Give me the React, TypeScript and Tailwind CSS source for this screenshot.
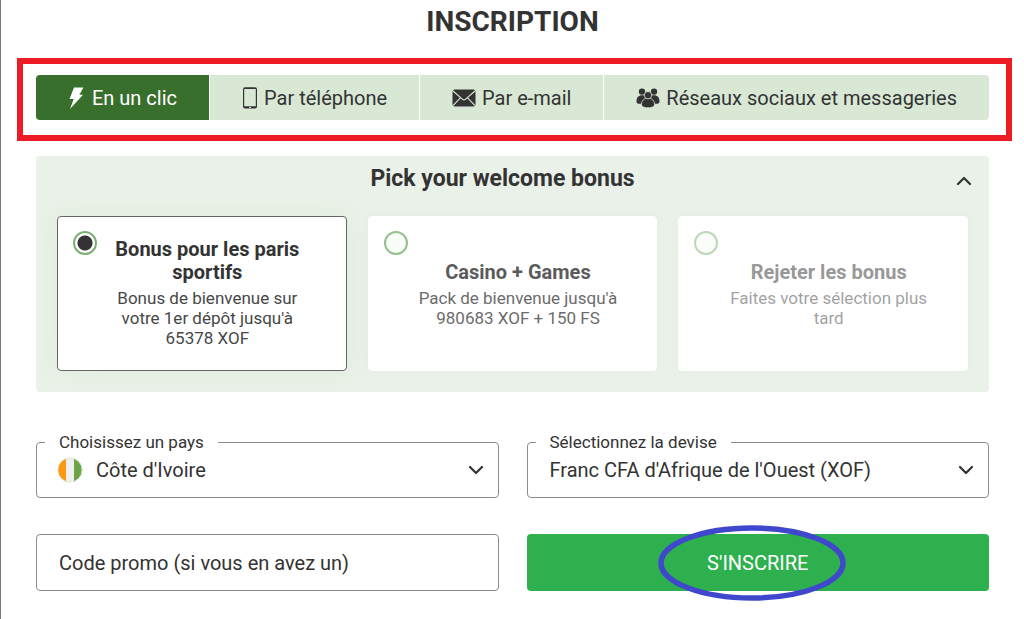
import React, { useState } from "react";

const BoltIcon = () => (
  <svg viewBox="0 0 16 24" className="h-6 w-4 shrink-0" fill="currentColor">
    <path d="M6 1.5h9.400l-4 7.300h3.600L2 23l3.700-10H1.500z" />
  </svg>
);

const PhoneIcon = () => (
  <svg viewBox="0 0 16 24" className="h-6 w-4 shrink-0">
    <path
      fill="currentColor"
      fillRule="evenodd"
      d="M3 1.200h10a2 2 0 0 1 2 2v17.300a2 2 0 0 1-2 2H3a2 2 0 0 1-2-2V3.200a2 2 0 0 1 2-2zM2.200 3v17.200h11.600V3z"
    />
    <path d="M7 21.400h2" stroke="#d9e8d5" strokeWidth="1" />
  </svg>
);

const MailIcon = () => (
  <svg viewBox="0 0 24 18" className="h-[18px] w-6 shrink-0">
    <rect x="0.5" y="0.5" width="23" height="17" rx="2.5" fill="currentColor" />
    <path
      d="M1 2l9.4 8.2q1.6 1.3 3.2 0L23 2M1.2 16.4l7.2-7.6M22.8 16.4l-7.2-7.6"
      fill="none"
      stroke="#d9e8d5"
      strokeWidth="1.1"
    />
  </svg>
);

const PeopleIcon = () => (
  <svg viewBox="0 0 24 20" className="h-5 w-6 shrink-0" fill="currentColor">
    <circle cx="6" cy="3.6" r="3.2" />
    <circle cx="18" cy="3.6" r="3.2" />
    <path d="M0.5 13c0-3.6 2-5.8 5.5-5.8s5 2 5 5v3.600H2.5Q0.500 15.800 0.500 13z" />
    <path d="M23.5 13c0-3.6-2-5.8-5.5-5.8s-5 2-5 5v3.600h8.500q2 0 2-2.800z" />
    <g stroke="#d9e8d5" strokeWidth="0.8">
      <path d="M5.500 16.500c0-4 2.600-6.300 6.500-6.300s6.500 2.300 6.500 6.300c0 2.300-2.900 3.300-6.500 3.300s-6.500-1-6.500-3.300z" />
      <circle cx="12" cy="7.200" r="3.700" />
    </g>
  </svg>
);

const Chevron = ({ className }: { className: string }) => (
  <svg
    viewBox="0 0 16 10"
    className={className}
    fill="none"
    stroke="currentColor"
    strokeWidth="2.2"
    strokeLinecap="round"
    strokeLinejoin="round"
  >
    <path d="M2 2l6 6 6-6" />
  </svg>
);

const FlagIcon = () => (
  <svg
    viewBox="0 0 26 26"
    className="pointer-events-none absolute left-5 top-[5px] h-[26px] w-[26px]"
  >
    <clipPath id="flag">
      <circle cx="13" cy="13" r="12" />
    </clipPath>
    <g clipPath="url(#flag)">
      <rect width="26" height="26" fill="#f0f0f0" />
      <rect width="9" height="26" fill="#ff9811" />
      <rect x="17" width="9" height="26" fill="#6da544" />
    </g>
    <circle cx="13" cy="13" r="12.2" fill="none" stroke="#d9e8d5" />
  </svg>
);

const tabs = [
  { label: "En un clic", icon: <BoltIcon /> },
  { label: "Par téléphone", icon: <PhoneIcon /> },
  { label: "Par e-mail", icon: <MailIcon /> },
  { label: "Réseaux sociaux et messageries", icon: <PeopleIcon /> },
];

const bonuses = [
  {
    id: "sport",
    title: "Bonus pour les paris sportifs",
    text: "Bonus de bienvenue sur votre 1er dépôt jusqu'à 65378 XOF",
    tone: "",
  },
  {
    id: "casino",
    title: "Casino + Games",
    text: "Pack de bienvenue jusqu'à 980683 XOF + 150 FS",
    tone: "opacity-80",
  },
  {
    id: "none",
    title: "Rejeter les bonus",
    text: "Faites votre sélection plus tard",
    tone: "opacity-50",
  },
];

type SelectProps = {
  id: string;
  label: string;
  option: string;
  flag?: React.ReactNode;
};

const SelectField = ({ id, label, option, flag }: SelectProps) => (
  <fieldset className="min-w-0 rounded border border-[#8c8c8c] pb-[9px]">
    <legend className="ml-2 px-3.5 text-[17px] leading-5">
      <label htmlFor={id}>{label}</label>
    </legend>
    <div className="relative">
      {flag}
      <select
        id={id}
        className={
          flag
            ? "h-9 w-full appearance-none pl-[59px] pr-12 text-xl leading-6 outline-none"
            : "h-9 w-full appearance-none pl-[22px] pr-12 text-xl leading-6 outline-none"
        }
      >
        <option>{option}</option>
      </select>
      <Chevron className="pointer-events-none absolute right-3.5 top-[13px] h-2.5 w-4" />
    </div>
  </fieldset>
);

const App = () => {
  const [tab, setTab] = useState(0);
  const [bonus, setBonus] = useState("sport");
  const [open, setOpen] = useState(true);

  return (
    <main className="min-h-screen border-l border-[#6d8069] bg-white pt-1 font-['Roboto',sans-serif] text-[#333]">
      <h1 className="text-center text-[28px] font-bold leading-9">
        INSCRIPTION
      </h1>
      <div className="ml-4 mr-3 mt-[18px] border-6 border-[#ed1c24] pb-[15px] pl-[13px] pr-[17px] pt-[11px]">
        <div role="tablist" className="flex gap-px overflow-hidden rounded">
          {tabs.map((item, i) => (
            <button
              key={item.label}
              type="button"
              role="tab"
              aria-selected={tab === i}
              onClick={() => setTab(i)}
              className={
                tab === i
                  ? "flex h-[45px] grow items-center justify-center gap-2 bg-[#396f2d] px-7 text-xl text-white"
                  : "flex h-[45px] grow items-center justify-center gap-1.5 bg-[#d9e8d5] px-7 text-xl"
              }
            >
              {item.icon}
              {item.label}
            </button>
          ))}
        </div>
      </div>

      <form className="ml-[35px] mr-[35px]" onSubmit={(e) => e.preventDefault()}>
        <section className="mt-[15px] rounded bg-[#eaf1e9] px-[21px] pb-[21px]">
          <div className="flex h-[60px] items-start pt-[7px]">
            <h2 className="grow text-center text-[23px] font-bold leading-8">
              Pick your welcome bonus
            </h2>
            <button
              type="button"
              aria-label="Pick your welcome bonus"
              aria-expanded={open}
              onClick={() => setOpen(!open)}
              className="-mr-1 mt-[13px] pl-2"
            >
              <Chevron className="h-2.5 w-4 rotate-180" />
            </button>
          </div>
          {open && (
            <div className="grid grid-cols-3 gap-[21px]">
              {bonuses.map((item) => (
                <label
                  key={item.id}
                  className={
                    bonus === item.id
                      ? "flex h-[155px] rounded border border-[#666] bg-white pl-[15px] pr-7 pt-3.5 shadow-[0_0_24px_#dfecd8]"
                      : "flex h-[155px] rounded border border-white bg-white pl-[15px] pr-7 pt-3.5 shadow-[0_0_8px_#e3ebe2]"
                  }
                >
                  <input
                    type="radio"
                    name="bonus"
                    checked={bonus === item.id}
                    onChange={() => setBonus(item.id)}
                    className={`h-6 w-6 shrink-0 appearance-none rounded-full border-2 border-[#7db072] bg-[#f8fdf7] checked:bg-[radial-gradient(circle,#333_7px,#fff_8px)] ${item.tone}`}
                  />
                  <span
                    className={`mt-[7px] flex grow flex-col gap-1 text-center ${item.tone}`}
                  >
                    <span className="flex h-[46px] items-end justify-center text-xl font-bold leading-[23px]">
                      {item.title}
                    </span>
                    <span className="px-2.5 text-[17px] leading-5 opacity-90">
                      {item.text}
                    </span>
                  </span>
                </label>
              ))}
            </div>
          )}
        </section>

        <div className="mt-10 grid grid-cols-2 gap-x-7 gap-y-9">
          <SelectField
            id="country"
            label="Choisissez un pays"
            option="Côte d'Ivoire"
            flag={<FlagIcon />}
          />
          <SelectField
            id="currency"
            label="Sélectionnez la devise"
            option="Franc CFA d'Afrique de l'Ouest (XOF)"
          />
          <input
            type="text"
            aria-label="Code promo"
            placeholder="Code promo (si vous en avez un)"
            className="h-[57px] w-full rounded border border-[#8c8c8c] px-[22px] text-xl outline-none placeholder:text-[#333]"
          />
          <button
            type="submit"
            className="relative h-[57px] rounded bg-[#2db04d] text-xl text-white"
          >
            S'INSCRIRE
            <svg
              viewBox="0 0 188 76"
              className="pointer-events-none absolute -top-[9px] left-[131px] h-[76px] w-[188px]"
            >
              <ellipse
                cx="94"
                cy="38"
                rx="91"
                ry="35"
                fill="none"
                stroke="#3f48cc"
                strokeWidth="5.5"
              />
            </svg>
          </button>
        </div>
      </form>
    </main>
  );
};

export default App;
